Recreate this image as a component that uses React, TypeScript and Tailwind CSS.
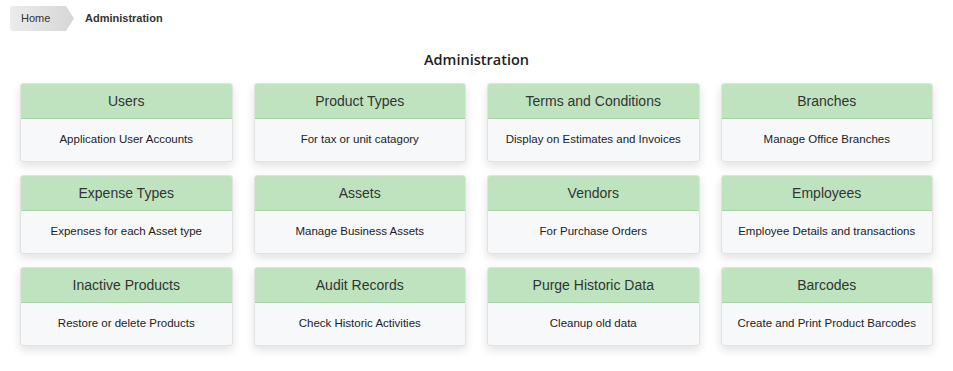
import React from "react";

const cards: [string, string][] = [
  ["Users", "Application User Accounts"],
  ["Product Types", "For tax or unit catagory"],
  ["Terms and Conditions", "Display on Estimates and Invoices"],
  ["Branches", "Manage Office Branches"],
  ["Expense Types", "Expenses for each Asset type"],
  ["Assets", "Manage Business Assets"],
  ["Vendors", "For Purchase Orders"],
  ["Employees", "Employee Details and transactions"],
  ["Inactive Products", "Restore or delete Products"],
  ["Audit Records", "Check Historic Activities"],
  ["Purge Historic Data", "Cleanup old data"],
  ["Barcodes", "Create and Print Product Barcodes"],
];

export default function App() {
  return (
    <div className="w-[953px] h-[371px] bg-white overflow-hidden" style={{ fontFamily: '"Liberation Sans", Arial, sans-serif' }}>
      <div className="flex items-center h-[25px] mt-[6px] ml-[10px]">
        <div
          className="h-[25px] w-[64px] pl-[11px] flex items-center text-[11px] text-[#333] bg-gradient-to-r from-[#ececec] to-[#d6d6d6]"
          style={{ clipPath: "polygon(0 0, 56px 0, 64px 50%, 56px 100%, 0 100%)", borderRadius: "3px 0 0 3px" }}
        >
          Home
        </div>
        <div className="ml-[11px] text-[11px] font-bold text-[#333]">Administration</div>
      </div>
      <div className="text-center text-[14.5px] font-semibold text-[#222] mt-[18px] leading-[22px]" style={{ fontFamily: '"Open Sans", sans-serif' }}>
        Administration
      </div>
      <div className="grid grid-cols-4 gap-x-[21px] gap-y-[13px] px-[20px] mt-[12px]">
        {cards.map(([t, d]) => (
          <div key={t} className="h-[79px] rounded-[3px] border border-[#e2e2e2] bg-[#f7f8fa] shadow-[0_4px_10px_rgba(0,0,0,0.12)] overflow-hidden flex flex-col">
            <div className="h-[35px] shrink-0 bg-[#bfe3bf] border-b border-[#a9d2a9] flex items-center justify-center text-[14px] text-[#333]">
              {t}
            </div>
            <div className="flex-1 flex items-center justify-center text-[11.5px] text-[#222]">{d}</div>
          </div>
        ))}
      </div>
    </div>
  );
}
